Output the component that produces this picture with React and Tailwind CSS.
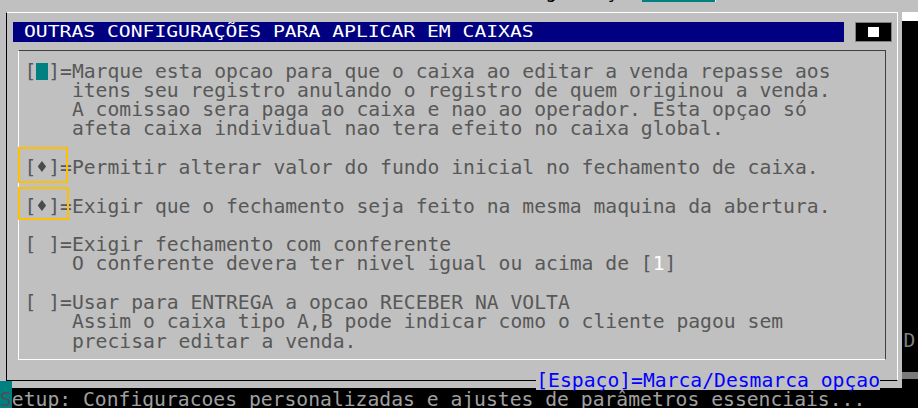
export default function App() {
  const Row = ({ children }) => (
    <div className="h-[19.3px] whitespace-pre">{children ?? '\u00a0'}</div>
  );
  const Dia = () => (
    <svg className="inline-block w-[1ch] h-[11px] align-[1.6px]" viewBox="0 0 12 11">
      <polygon points="6,0 10.2,5.5 6,11 1.8,5.5" fill="#4a4a4a" />
    </svg>
  );
  return (
    <div className="w-[918px] h-[408px] overflow-hidden bg-black flex flex-col font-['DejaVu_Sans_Mono',monospace] text-[19.7px] leading-[19.3px]">
      {/* top strip */}
      <div className="h-[12px] shrink-0 bg-[#c0c0c0] overflow-hidden flex items-start">
        <div className="w-[642px] shrink-0 whitespace-pre text-black mt-[-18px]">
          {' '.repeat(46)}g{'    '}ç
        </div>
        <div className="w-[73px] h-[2px] bg-[#008080]" />
        <div className="w-[1px] h-[2px] bg-white" />
      </div>

      {/* middle */}
      <div className="flex h-[376px] shrink-0">
        <div className="w-[902px] shrink-0 bg-[#c0c0c0] flex flex-col">
          <div className="relative ml-[6px] w-[892px] h-[369px] shrink-0 border border-l-black border-t-white border-r-white border-b-black flex flex-col">
            {/* title row */}
            <div className="flex mt-[9px] ml-[6px]">
              <div className="w-[831px] h-[20px] bg-[#000080] flex items-center pl-[11px] text-white whitespace-pre">
                <span className="inline-block scale-y-[0.8]">OUTRAS CONFIGURAÇÕES PARA APLICAR EM CAIXAS</span>
              </div>
              <div className="ml-[11px] w-[37px] h-[20px] bg-black border border-[#808080] flex items-center justify-center">
                <div className="w-[11px] h-[10px] bg-white" />
              </div>
            </div>

            {/* inner panel */}
            <div className="relative mt-[8px] ml-[11px] w-[868px] h-[310px] border border-l-white border-b-white border-t-[#404040] border-r-[#404040] pt-[10.5px] pl-[5.5px] text-[#585858]">
              <Row>
                [<span className="inline-block w-[1ch] h-[17px] bg-[#008080] align-[-2px]" />]=Marque esta opcao para que o caixa ao editar a venda repasse aos
              </Row>
              <Row>{'    itens seu registro anulando o registro de quem originou a venda.'}</Row>
              <Row>{'    A comissao sera paga ao caixa e nao ao operador. Esta opçao só'}</Row>
              <Row>{'    afeta caixa individual nao tera efeito no caixa global.'}</Row>
              <Row />
              <Row>
                [<Dia />]=Permitir alterar valor do fundo inicial no fechamento de caixa.
              </Row>
              <Row />
              <Row>
                [<Dia />]=Exigir que o fechamento seja feito na mesma maquina da abertura.
              </Row>
              <Row />
              <Row>{'[ ]=Exigir fechamento com conferente'}</Row>
              <Row>
                {'    O conferente devera ter nivel igual ou acima de ['}
                <span className="text-white">1</span>]
              </Row>
              <Row />
              <Row>{'[ ]=Usar para ENTREGA a opcao RECEBER NA VOLTA'}</Row>
              <Row>{'    Assim o caixa tipo A,B pode indicar como o cliente pagou sem'}</Row>
              <Row>{'    precisar editar a venda.'}</Row>

              <div className="absolute left-[-1px] top-[96.3px] w-[50px] h-[35.5px] border-2 border-[#ffc000]" />
              <div className="absolute left-[-1px] top-[136.3px] w-[51px] h-[32.7px] border-2 border-[#ffc000]" />
            </div>

            <div className="absolute right-[17px] bottom-[-10px] bg-[#c0c0c0] text-[#0000ff] whitespace-pre">
              [Espaço]=Marca/Desmarca opçao
            </div>
          </div>
          <div className="flex h-[7px]">
            <div className="w-[12px] bg-[#008080]" />
          </div>
        </div>

        <div className="flex-1 flex flex-col">
          <div className="h-[9px] bg-white" />
          <div className="mt-[310px] pl-[1.5px] text-[#7f7f7f] whitespace-pre">D</div>
          <div className="mt-[21.7px] h-[7px] bg-[#7a7a7a]" />
        </div>
      </div>

      {/* bottom strip */}
      <div className="h-[20px] shrink-0 bg-black pt-[1.7px] whitespace-pre text-[#a0a0a0] overflow-hidden">
        <span className="bg-[#008080] text-[#505050]">S</span>etup: Configuracoes personalizadas e ajustes de parâmetros essenciais...
      </div>
    </div>
  );
}
